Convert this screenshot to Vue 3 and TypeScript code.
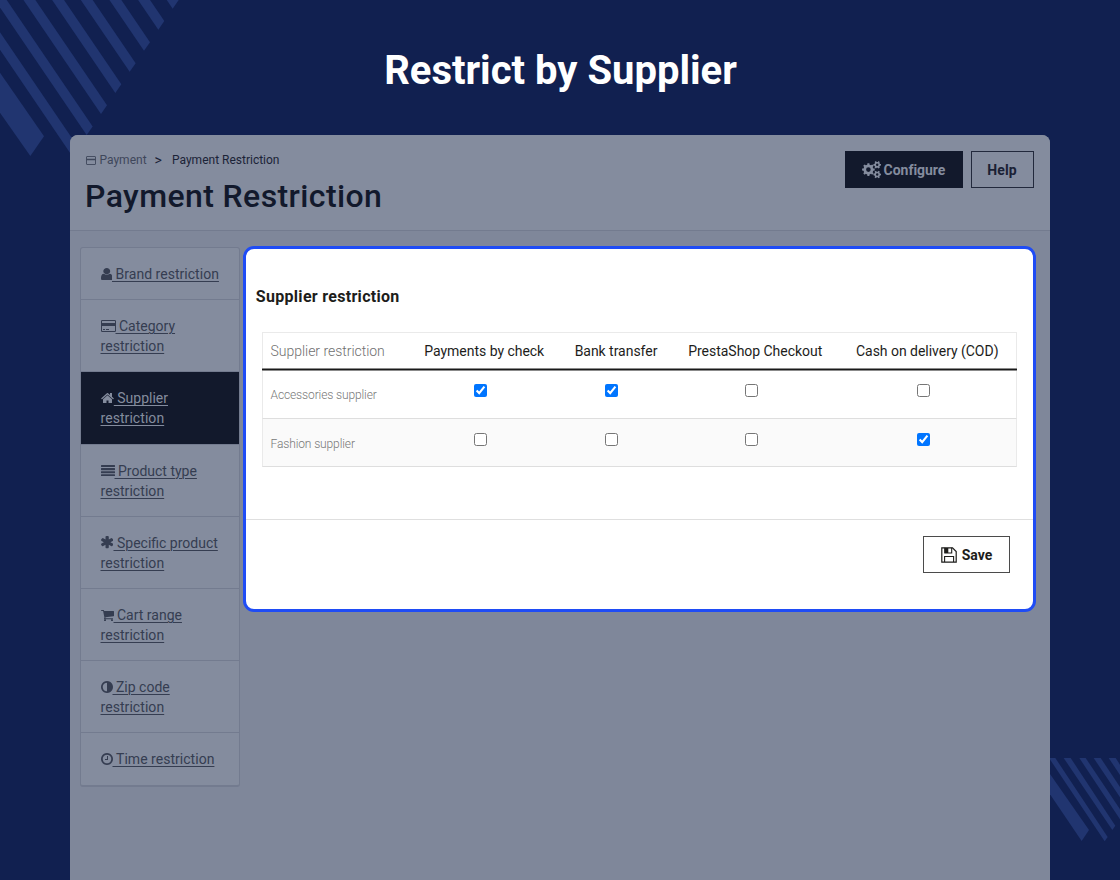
<script setup lang="ts">
import { ref } from 'vue'

interface NavItem {
  icon: string
  lines: string[]
  active?: boolean
}

interface Shape {
  box: string
  w: number
  h: number
  advance: number
  drop: number
  d: string
}

const nav: NavItem[] = [
  { icon: 'user', lines: ['Brand restriction'] },
  { icon: 'card', lines: ['Category', 'restriction'] },
  { icon: 'home', lines: ['Supplier', 'restriction'], active: true },
  { icon: 'justify', lines: ['Product type', 'restriction'] },
  { icon: 'asterisk', lines: ['Specific product', 'restriction'] },
  { icon: 'cart', lines: ['Cart range', 'restriction'] },
  { icon: 'adjust', lines: ['Zip code', 'restriction'] },
  { icon: 'clock', lines: ['Time restriction'] },
]

const icons: Record<string, Shape> = {
  user: {
    box: '256 128 1280 1536', w: 11.5, h: 12.6, advance: 11.5, drop: -1.2,
    d: 'M1536 1399q0 109-62.5 187t-150.5 78h-854q-88 0-150.5-78t-62.5-187q0-85 8.5-160.5t31.5-152 58.5-131 94-89 134.5-34.5q131 128 313 128t313-128q76 0 134.5 34.5t94 89 58.5 131 31.5 152 8.5 160.5zm-256-887q0 159-112.5 271.5t-271.5 112.5-271.5-112.5-112.5-271.5 112.5-271.5 271.5-112.5 271.5 112.5 112.5 271.5z',
  },
  card: {
    box: '0 0 15 12', w: 15, h: 12, advance: 15, drop: -1,
    d: 'M1.3 0H13.7Q15 0 15 1.3V10.7Q15 12 13.7 12H1.3Q0 12 0 10.7V1.3Q0 0 1.3 0ZM1.3 1Q1 1 1 1.3V3H14V1.3Q14 1 13.7 1ZM1 6V10.7Q1 11 1.3 11H13.7Q14 11 14 10.7V6ZM2 9H4V10H2ZM5 9H8V10H5Z',
  },
  home: {
    box: '64 256 1664 1280', w: 13, h: 10.8, advance: 13.3, drop: 0,
    d: 'M1472 992v480q0 26-19 45t-45 19h-384v-384h-256v384h-384q-26 0-45-19t-19-45v-480q0-1 .5-3t.5-3l575-474 575 474q1 2 1 6zm223-69l-62 74q-8 9-21 11h-3q-13 0-21-7l-692-577-692 577q-12 8-24 7-13-2-21-11l-62-74q-8-10-7-23.5t11-21.5l719-599q32-26 76-26t76 26l244 204v-195q0-14 9-23t23-9h192q14 0 23 9t9 23v408l219 182q10 8 11 21.5t-7 23.5z',
  },
  justify: {
    box: '0 0 14 11.5', w: 14, h: 11.5, advance: 14, drop: -0.5,
    d: 'M.4 0H13.6L14 .4V1.7L13.6 2.1H.4L0 1.7V.4ZM.4 3.1H13.6L14 3.5V4.8L13.6 5.2H.4L0 4.8V3.5ZM.4 6.2H13.6L14 6.6V7.9L13.6 8.3H.4L0 7.9V6.6ZM.4 9.3H13.6L14 9.7V11L13.6 11.4H.4L0 11V9.7Z',
  },
  asterisk: {
    box: '176 128 1440 1536', w: 12.3, h: 12.3, advance: 13, drop: -1,
    d: 'M1546 1050q46 26 59.5 77.5t-12.5 97.5l-64 110q-26 46-77.5 59.5t-97.5-12.5l-266-153v307q0 52-38 90t-90 38h-128q-52 0-90-38t-38-90v-307l-266 153q-46 26-97.5 12.5t-77.5-59.5l-64-110q-26-46-12.5-97.5t59.5-77.5l266-154-266-154q-46-26-59.5-77.5t12.5-97.5l64-110q26-46 77.5-59.5t97.5 12.5l266 153v-307q0-52 38-90t90-38h128q52 0 90 38t38 90v307l266-153q46-26 97.5-12.5t77.5 59.5l64 110q26 46 12.5 97.5t-59.5 77.5l-266 154z',
  },
  cart: {
    box: '64 256 1664 1408', w: 13, h: 11.3, advance: 13, drop: -1,
    d: 'M704 1536q0 52-38 90t-90 38-90-38-38-90 38-90 90-38 90 38 38 90zm896 0q0 52-38 90t-90 38-90-38-38-90 38-90 90-38 90 38 38 90zm128-1088v512q0 24-16.5 42.5t-40.5 21.5l-1044 122q13 60 13 70 0 16-24 64h920q26 0 45 19t19 45-19 45-45 19h-1024q-26 0-45-19t-19-45q0-11 8-31.5t16-36 21.5-40 15.5-29.5l-177-823h-204q-26 0-45-19t-19-45 19-45 45-19h256q16 0 28.5 6.5t19.5 15.5 13 24.5 8 26 5.5 29.5 4.5 26h1201q26 0 45 19t19 45z',
  },
  adjust: {
    box: '128 128 1536 1536', w: 12, h: 12, advance: 12, drop: -0.9,
    d: 'M896 1440v-1088q-148 0-273 73t-198 198-73 273 73 273 198 198 273 73zm768-544q0 209-103 385.5t-279.5 279.5-385.5 103-385.5-103-279.5-279.5-103-385.5 103-385.5 279.5-279.5 385.5-103 385.5 103 279.5 279.5 103 385.5z',
  },
  clock: {
    box: '128 128 1536 1536', w: 12, h: 12, advance: 12, drop: -0.9,
    d: 'M1024 544v448q0 14-9 23t-23 9h-320q-14 0-23-9t-9-23v-64q0-14 9-23t23-9h224v-352q0-14 9-23t23-9h64q14 0 23 9t9 23zm416 352q0-148-73-273t-198-198-273-73-273 73-198 198-73 273 73 273 198 198 273 73 273-73 198-198 73-273zm224 0q0 209-103 385.5t-279.5 279.5-385.5 103-385.5-103-279.5-279.5-103-385.5 103-385.5 279.5-279.5 385.5-103 385.5 103 279.5 279.5 103 385.5z',
  },
}

const methods = ['Payments by check', 'Bank transfer', 'PrestaShop Checkout', 'Cash on delivery (COD)']
const rows = ref([
  { name: 'Accessories supplier', allowed: [true, true, false, false] },
  { name: 'Fashion supplier', allowed: [false, false, false, true] },
])

/* Outline of a gear: teeth around a ring, with a round hole. */
function gear(cx: number, cy: number, outer: number, inner: number, hole: number, teeth: number): string {
  const step = (Math.PI * 2) / teeth
  const at = (r: number, a: number) => `${(cx + r * Math.cos(a)).toFixed(2)} ${(cy + r * Math.sin(a)).toFixed(2)}`
  const pts: string[] = []
  for (let i = 0; i < teeth; i++) {
    const a = i * step
    pts.push(at(inner, a - step * 0.3), at(outer, a - step * 0.2), at(outer, a + step * 0.2), at(inner, a + step * 0.3))
  }
  return `M${pts.join('L')}ZM${cx - hole} ${cy}a${hole} ${hole} 0 1 0 ${hole * 2} 0a${hole} ${hole} 0 1 0 ${-hole * 2} 0Z`
}
const gears = gear(6.4, 8.6, 6.4, 5, 2.3, 8) + gear(15.2, 3.8, 3.9, 2.9, 1.2, 6) + gear(15.2, 13.5, 3.9, 2.9, 1.2, 6)

/* Corner stripes, in thirds of a pixel. */
const leftStripes = Array.from({ length: 8 }, (_, k) => {
  const x = 518 - 43 * k
  const y = 26 + 63.2 * k
  return `${x},${y} ${x + 18},${y - 26} ${x + 18 - 680},${y - 26 - 1000} ${x - 680},${y - 1000}`
})
</script>

<template>
  <main class="stage">
    <svg class="stripes" width="1120" height="880" viewBox="0 0 3360 2640" aria-hidden="true">
      <polygon v-for="p in leftStripes" :key="p" :points="p" />
      <polygon points="91,468 132,409 0,218 0,338" />
      <g transform="translate(3060 2220)">
        <polygon points="185,303 207,270 90,102 90,163" />
        <polygon points="254,304 263,291 106,54 87,54" />
        <polygon points="277,270 286,257 152,54 131,54" />
        <polygon points="178,54 197,54 300,208 300,238" />
        <polygon points="221,54 242,54 300,141 300,172" />
        <polygon points="266,54 287,54 300,74 300,105" />
      </g>
    </svg>

    <h1 class="headline">Restrict by Supplier</h1>

    <div class="panel">
      <header class="head">
        <div>
          <div class="crumbs">
            <svg width="10" height="9" viewBox="0 0 10 9"><path d="M1 .5H9Q9.5 .5 9.5 1V8Q9.5 8.5 9 8.5H1Q.5 8.5 .5 8V1Q.5 .5 1 .5Z" fill="none" stroke="currentColor" stroke-width=".9" /><path d="M.5 2.7H9.5V4.3H.5Z" fill="currentColor" /></svg>
            <span class="crumb">Payment</span>
            <span class="sep">&gt;</span>
            <span class="here">Payment Restriction</span>
          </div>
          <h2 class="title">Payment Restriction</h2>
        </div>
        <div class="actions">
          <button class="btn dark" type="button">
            <svg width="19" height="18" viewBox="0 0 19 18"><path :d="gears" fill="currentColor" fill-rule="evenodd" /></svg>
            <span>Configure</span>
          </button>
          <button class="btn help" type="button">Help</button>
        </div>
      </header>

      <div class="body">
        <nav class="side">
          <a v-for="item in nav" :key="item.icon" class="item" :class="{ active: item.active, single: item.lines.length === 1 }">
            <span class="line"><svg
              :width="icons[item.icon].w" :height="icons[item.icon].h" :viewBox="icons[item.icon].box" preserveAspectRatio="none"
              :style="{ marginRight: icons[item.icon].advance - icons[item.icon].w + 'px', verticalAlign: icons[item.icon].drop + 'px' }"
            ><path :d="icons[item.icon].d" fill="currentColor" fill-rule="evenodd" /></svg><u>{{ '\u00a0' + item.lines[0] }}</u></span>
            <span v-if="item.lines[1]" class="line"><u>{{ item.lines[1] }}</u></span>
          </a>
        </nav>

        <section class="card">
          <h3 class="caption">Supplier restriction</h3>
          <div class="table">
            <div class="row top">
              <span class="name">Supplier restriction</span>
              <span v-for="m in methods" :key="m" class="cell">{{ m }}</span>
            </div>
            <div v-for="(row, r) in rows" :key="row.name" class="row data" :class="{ alt: r === 1 }">
              <span class="name">{{ row.name }}</span>
              <span v-for="(_, i) in methods" :key="i" class="cell">
                <input v-model="row.allowed[i]" type="checkbox">
              </span>
            </div>
          </div>
          <footer class="foot">
            <button class="btn save" type="button">
              <svg width="16" height="16" viewBox="0 0 16 16">
                <path d="M.8 .8H11.5L15.2 4.5V15.2H.8Z" fill="none" stroke="currentColor" stroke-width="1.2" />
                <path d="M3.8 .8V6H10.7V.8M3.6 15V9.5H12.6V15" fill="none" stroke="currentColor" stroke-width="1.1" />
                <path d="M3.5 1H7.3V6H3.5Z" fill="currentColor" />
              </svg>
              <span>Save</span>
            </button>
          </footer>
        </section>
      </div>
    </div>
  </main>
</template>

<style>
body { margin: 0; background: #112050; }
</style>

<style scoped>
* { box-sizing: border-box; }
.stage {
  position: relative;
  width: 1120px;
  height: 880px;
  overflow: hidden;
  background: #112050;
  font-family: Roboto, "Liberation Sans", sans-serif;
  color: #12192c;
}
.stripes { position: absolute; inset: 0; fill: #213570; }
.headline {
  position: relative;
  margin: 0;
  height: 135px;
  padding: 47px 0 0 1px;
  font-size: 40px;
  line-height: 48px;
  font-weight: 700;
  text-align: center;
  color: #fff;
}
.panel {
  position: relative;
  width: 980px;
  height: 745px;
  margin: 0 auto;
  border-radius: 8px 8px 0 0;
  overflow: hidden;
  background: #7f879a;
}
.head {
  display: flex;
  justify-content: space-between;
  height: 96px;
  padding: 16px 16px 0 15px;
  background: #848c9e;
  border-bottom: 1px solid #737b8f;
}
.crumbs { display: flex; align-items: center; height: 18px; font-size: 12px; line-height: 18px; color: #3f475b; }
.crumbs svg { margin: 1px 3.5px 0 1px; }
.crumb { width: 47px; }
.sep { margin-left: 8px; width: 17.5px; font-size: 14px; color: #1b2337; }
.here { color: #1b2337; }
.title { margin: 5px 0 0; font-size: 32px; line-height: 44px; font-weight: 500; letter-spacing: .4px; white-space: nowrap; }
.actions { display: flex; gap: 8px; }
.btn {
  display: flex;
  align-items: center;
  justify-content: center;
  height: 37px;
  padding: 0;
  border: 1px solid #22293c;
  background: none;
  color: #1a2135;
  font: 700 14px/20px Roboto, "Liberation Sans", sans-serif;
}
.dark { width: 118px; padding-right: 1px; gap: 3px; background: #12192c; border-color: #12192c; color: #848c9e; }
.dark span { letter-spacing: -.03px; }
.help { width: 63px; padding-right: 1px; letter-spacing: .1px; }
.body { display: flex; align-items: flex-start; padding: 15px 14px 0 10px; }
.side {
  width: 160px;
  height: 540px;
  margin-top: 1px;
  border: 1px solid #737b8f;
  border-bottom-width: 2px;
  border-radius: 3px;
  background: #848c9e;
}
.item {
  display: block;
  height: 72.2px;
  padding: 16px 0 0 19.5px;
  border-bottom: 1px solid #737b8f;
  font-size: 14px;
  line-height: 20px;
  color: #353d51;
  white-space: nowrap;
}
.item.single { height: 52.2px; letter-spacing: .03px; }
.item:last-child { border-bottom: 0; }
.item.active { background: #12192c; color: #848c9e; }
.line { display: block; height: 20px; }
.item u { text-underline-offset: 2px; text-decoration-thickness: 1px; }
.line:nth-child(2) { letter-spacing: .06px; }
.card {
  width: 793px;
  height: 366px;
  margin-left: 3px;
  flex: none;
  border: 3px solid #1f4cf5;
  border-radius: 11px;
  background: #fff;
  color: #1d1d1b;
}
.caption { margin: 37px 0 0 9.8px; font-size: 16px; line-height: 22px; font-weight: 700; letter-spacing: .3px; }
.table { width: 755px; margin: 24px 0 0 16px; border: 1px solid #eaeaea; border-bottom-color: #dedede; }
.row { display: grid; grid-template-columns: 146.5px 149.5px 114px 164.5px 1fr; margin: 0 -1px; padding-left: 1px; }
.top {
  height: 38px;
  background: linear-gradient(#8b8b8b 1px, #1a1a1a 1px 2px, #8b8b8b 2px) bottom / 100% 3px no-repeat;
  font-size: 14px;
  line-height: 36px;
  letter-spacing: -.03px;
}
.cell { text-align: center; white-space: nowrap; }
.name { padding-left: 7.5px; font-weight: 300; color: #6f6f6f; }
.data { height: 47px; }
.data.alt { height: 48px; border: 1px solid #eaeaea; border-top-color: #dedede; border-bottom: 0; padding-left: 0; background: #fafafa; }
.data .name { font-size: 12px; line-height: 49px; letter-spacing: -.12px; color: #777; }
.data.alt .name { line-height: 50px; }
.data .cell { padding: 13px 8.4px 0 0; line-height: 0; }
.data .cell:last-child { padding-right: 7px; }
.data.alt .cell { padding-top: 14px; }
.data.alt .cell:last-child { padding-right: 6px; }
.data input { width: 13px; height: 13px; margin: 0; }
.foot { display: flex; justify-content: flex-end; height: 90px; margin-top: 52px; padding: 16px 23px 0 0; border-top: 1px solid #dfdfdf; }
.save { width: 87px; border-color: #4b4b4b; gap: 5px; color: #1d1d1b; }
</style>
